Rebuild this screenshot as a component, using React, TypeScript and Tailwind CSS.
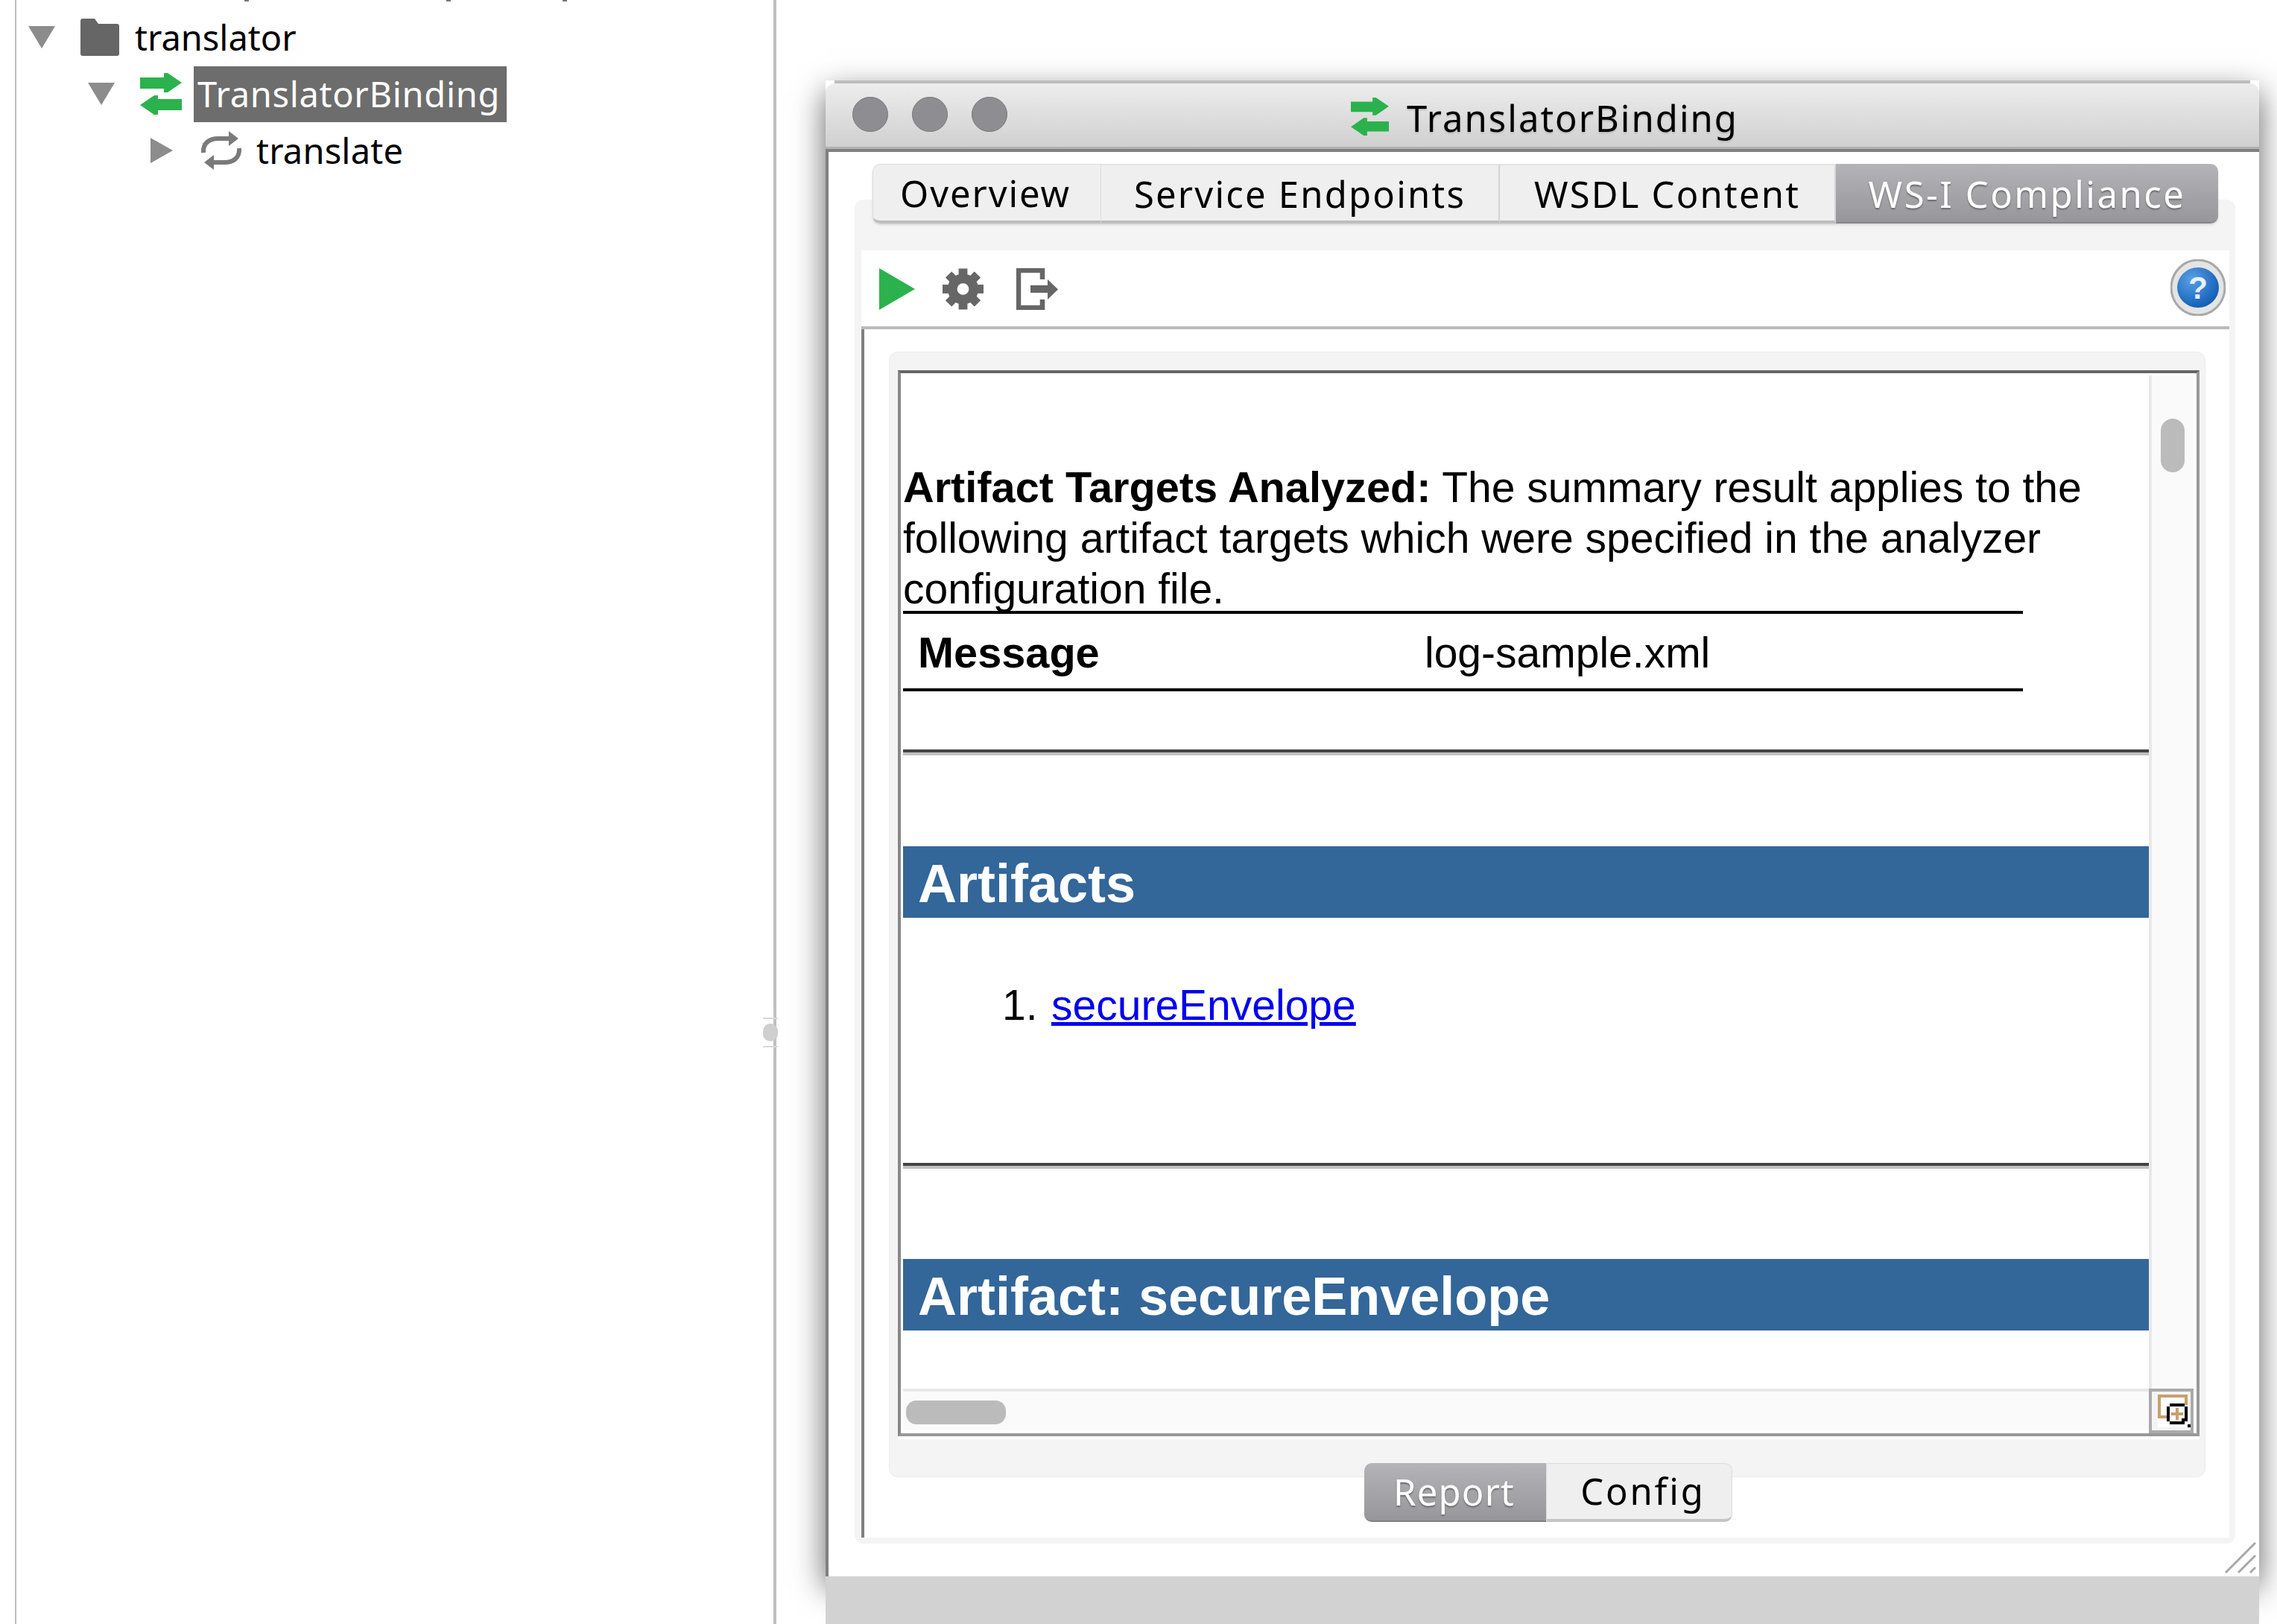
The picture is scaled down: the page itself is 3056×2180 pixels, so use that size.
const uiFont = "[font-family:'Noto_Sans',sans-serif]";

const SwapIcon = ({ className }: { className: string }) => (
  <svg viewBox="0 0 56 56" className={className}>
    <path d="M0 6h32V0h5l19 13-19 13h-5v-5H0z" fill="#2bb24c" />
    <path d="M56 35H24v-5h-5L0 43l19 13h5v-6h32z" fill="#2bb24c" />
  </svg>
);

const LoopIcon = () => (
  <svg viewBox="0 0 56 54" className="w-[56px] h-[54px]" fill="none">
    <path d="M4 30C3 17 12 11 24 11h16" stroke="#7a7a7a" strokeWidth="6" />
    <path d="M38 1l13 10-13 10z" fill="#7a7a7a" />
    <path d="M52 24c1 13-8 19-20 19H16" stroke="#7a7a7a" strokeWidth="6" />
    <path d="M18 33L5 43l13 10z" fill="#7a7a7a" />
  </svg>
);

const Caret = ({ open }: { open: boolean }) =>
  open ? (
    <svg viewBox="0 0 36 30" className="w-[36px] h-[30px]">
      <path d="M0 0h36L18 30z" fill="#8c8c8c" />
    </svg>
  ) : (
    <svg viewBox="0 0 30 34" className="w-[30px] h-[34px]">
      <path d="M0 0l30 17L0 34z" fill="#8c8c8c" />
    </svg>
  );

const Gear = () => (
  <svg viewBox="0 0 56 56" className="w-[55px] h-[56px]">
    <g fill="#666">
      <rect x="22" y="0" width="12" height="56" />
      <rect x="22" y="0" width="12" height="56" transform="rotate(45 28 28)" />
      <rect x="22" y="0" width="12" height="56" transform="rotate(90 28 28)" />
      <rect x="22" y="0" width="12" height="56" transform="rotate(135 28 28)" />
    </g>
    <circle cx="28" cy="28" r="21" fill="#666" />
    <circle cx="28" cy="28" r="8" fill="#fff" />
  </svg>
);

const ExportIcon = () => (
  <svg viewBox="0 0 56 56" className="w-[56px] h-[56px]" fill="none">
    <path d="M35 15V3H3v50h32V42" stroke="#666" strokeWidth="6.5" />
    <path d="M19 23h23v-8l14 13.500-14 13.500v-9H19z" fill="#666" />
  </svg>
);

const HelpIcon = () => (
  <svg viewBox="0 0 74 76" className="w-[74px] h-[76px]">
    <ellipse cx="37" cy="38" rx="36" ry="37" fill="#e4e4e4" stroke="#a9a9a9" strokeWidth="3" />
    <defs>
      <radialGradient id="helpBlue" cx="35%" cy="30%" r="75%">
        <stop offset="0%" stopColor="#5a9fe6" />
        <stop offset="100%" stopColor="#0f5db5" />
      </radialGradient>
    </defs>
    <ellipse cx="37" cy="38" rx="28" ry="27" fill="url(#helpBlue)" />
    <text x="37" y="53" textAnchor="middle" fontSize="42" fontWeight="700" fill="#e8f1fb" fontFamily="Liberation Sans, sans-serif">?</text>
  </svg>
);

const ZoomCorner = () => (
  <svg viewBox="0 0 44 44" className="w-[44px] h-[44px]" shapeRendering="crispEdges">
    <rect x="0" y="0" width="40" height="44" fill="#fff" />
    <path d="M2 30V2h36v12" fill="none" stroke="#c8a06c" strokeWidth="4" />
    <rect x="0" y="28" width="14" height="4" fill="#c8a06c" />
    <path d="M16 12h20v4h4v20h-4v4H16v-4h-4V16h4z" fill="#000" />
    <rect x="16" y="16" width="20" height="20" fill="#fff" />
    <rect x="24" y="18" width="4" height="16" fill="#c8a06c" />
    <rect x="18" y="24" width="16" height="4" fill="#c8a06c" />
    <rect x="32" y="32" width="4" height="4" fill="#000" />
    <rect x="40" y="40" width="4" height="4" fill="#000" />
  </svg>
);

const TreeRow = ({ indent, children }: { indent: string; children: React.ReactNode }) => (
  <div className={`flex items-center h-[76px] ${indent}`}>{children}</div>
);

const Tab = ({ label, width, active }: { label: string; width: string; active?: boolean }) => (
  <div
    className={`${width} h-full flex items-center justify-center pt-[3px] text-[49px] ${
      active
        ? "tracking-[2.5px] bg-gradient-to-b from-[#b4b4b8] to-[#97979b] text-white rounded-r-[10px] [text-shadow:0_2px_2px_#6a6a6a] border-b-2 border-[#85858a]"
        : "tracking-[2.2px] bg-[#efefef] text-black border-r-2 border-[#d4d4d4] border-t-2 border-t-[#e4e4e4] border-b-4 border-b-[#bdbdbd]"
    }`}
  >
    {label}
  </div>
);

export default function App() {
  return (
    <div className={`w-[3056px] h-[2180px] overflow-hidden bg-white flex ${uiFont}`}>
      {/* left tree */}
      <div className="w-[1042px] h-full shrink-0 relative border-r-4 border-[#c0c0c0]">
        <div className="ml-[20px] h-full border-l-2 border-[#bdbdbd] text-[47px] text-black">
          {/* descenders of the row scrolled out above */}
          <div className="h-[2px] flex mb-[10px]">
            <div className="ml-[306px] w-[6px] bg-[#777777]" />
            <div className="ml-[265px] w-[6px] bg-[#777777]" />
            <div className="ml-[150px] w-[6px] bg-[#777777]" />
          </div>
          <TreeRow indent="pl-[16px] gap-[34px]">
            <Caret open />
            <svg viewBox="0 0 52 50" className="w-[52px] h-[50px]">
              <path d="M3 0h16l5 7h25a3 3 0 0 1 3 3v37a3 3 0 0 1-3 3H3a3 3 0 0 1-3-3V3a3 3 0 0 1 3-3z" fill="#666" />
            </svg>
            <span className="ml-[-13px]">translator</span>
          </TreeRow>
          <TreeRow indent="pl-[96px] gap-[34px]">
            <Caret open />
            <SwapIcon className="w-[56px] h-[56px]" />
            <span className="ml-[-18px] h-[75px] w-[420px] bg-[#6d6d6d] text-white flex items-center pl-[5px] tracking-[0.7px]">TranslatorBinding</span>
          </TreeRow>
          <TreeRow indent="pl-[180px] gap-[37px]">
            <Caret open={false} />
            <LoopIcon />
            <span className="ml-[-18px] tracking-[0.2px]">translate</span>
          </TreeRow>
        </div>
        {/* sash handle */}
        <div className="absolute left-[1024px] top-[1366px] w-[20px] h-[40px] border-y-2 border-[#d8d8d8] flex items-center">
          <div className="w-[20px] h-[24px] rounded-full bg-[#cfcfcf]" />
        </div>
      </div>

      {/* floating window */}
      <div className="pl-[66px] pt-[108px] flex flex-col">
        <div className="w-[1924px] h-[2008px] flex flex-col shadow-[0_16px_40px_rgba(0,0,0,0.62)] bg-white">
          <div className="h-[4px] mx-[12px] bg-[#bdbdbd] shrink-0" />
          <div className="h-[92px] shrink-0 rounded-t-[12px] bg-gradient-to-b from-[#ededed] to-[#cfcfcf] border-b-[4px] border-[#808080] shadow-[inset_0_-3px_0_#b0b0b0] flex items-center relative">
            <div className="flex gap-[32px] pl-[36px] mb-[5px]">
              <div className="w-[48px] h-[47px] rounded-full bg-[#8e8e92] border border-[#77777a]" />
              <div className="w-[48px] h-[47px] rounded-full bg-[#8e8e92] border border-[#77777a]" />
              <div className="w-[48px] h-[47px] rounded-full bg-[#8e8e92] border border-[#77777a]" />
            </div>
            <div className="absolute left-[704px] top-[16px] flex items-center gap-[23px] text-[49px] leading-[51px] tracking-[2px] text-black">
              <SwapIcon className="w-[53px] h-[51px]" />
              <span className="pt-[5px] [text-shadow:0_2px_2px_#bbb]">TranslatorBinding</span>
            </div>
          </div>

          <div className="flex-1 border-l-4 border-[#808080] pt-[16px] flex flex-col relative">
            <div className="ml-[59px] w-[1806px] h-[80px] flex relative z-10 shrink-0 rounded-[10px] shadow-[0_2px_3px_rgba(0,0,0,0.12)]">
              <div className="w-[307px] h-full flex items-center justify-center pt-[3px] pr-[4px] text-[49px] tracking-[1.9px] bg-[#efefef] text-black rounded-l-[10px] border border-[#dcdcdc] border-b-4 border-b-[#bdbdbd]">Overview</div>
              <Tab label="Service Endpoints" width="w-[535px]" />
              <Tab label="WSDL Content" width="w-[451px]" />
              <Tab label="WS-I Compliance" width="w-[513px]" active />
            </div>

            <div className="ml-[35px] mt-[-32px] w-[1853px] h-[1804px] rounded-[12px] bg-[#f4f4f4] pt-[68px] pl-[9px] pr-[8px] pb-[8px] flex flex-col">
              <div className="h-[106px] shrink-0 bg-white border-b-4 border-[#bbbbbb] flex items-start pt-[24px] relative">
                <svg viewBox="0 0 48 56" className="w-[48px] h-[56px] ml-[24px]">
                  <path d="M0 0l48 28L0 56z" fill="#2bb24c" />
                </svg>
                <div className="ml-[37px]"><Gear /></div>
                <div className="ml-[44px]"><ExportIcon /></div>
                <div className="absolute left-[1757px] top-[12px]"><HelpIcon /></div>
              </div>

              <div className="flex-1 bg-white border-l-4 border-[#808080] flex flex-col">
                <div className="ml-[33px] mt-[30px] w-[1767px] h-[1511px] shrink-0 rounded-[12px] bg-[#f4f4f4] border border-[#ececec] pt-[24px] pl-[11px]">
                  <div className="w-[1747px] h-[1431px] bg-white border-4 border-[#999999] border-t-[#666666] border-l-[#888888] shadow-[0_4px_0_#ffffff] pr-[4px] pb-[4px] flex flex-col">
                    <div className="flex flex-1 min-h-0">
                      <div className="flex-1 min-w-0 overflow-hidden pl-[3px] pt-[119px] font-['Liberation_Sans',sans-serif] text-[57px] leading-[68px] text-black">
                        <p className="whitespace-nowrap">
                          <b className="text-[57.7px]">Artifact Targets Analyzed:</b> The summary result applies to the
                          <br />
                          following artifact targets which were specified in the analyzer
                          <br />
                          configuration file.
                        </p>
                        <div className="mt-[-4px] w-[1503px] h-[108px] border-y-4 border-black flex items-center pl-[20px] pt-[4px]">
                          <b className="w-[680px] text-[57.7px]">Message</b>
                          <span>log-sample.xml</span>
                        </div>
                        <div className="mt-[78px] h-[8px] border-t-4 border-[#444444] bg-[#c0c0c0]" />
                        <div className="mt-[122px] h-[96px] bg-[#336699] text-white font-bold text-[72px] flex items-center pl-[20px] pt-[4px]">Artifacts</div>
                        <div className="mt-[83px] flex pl-[133px]">
                          <span className="w-[66px]">1.</span>
                          <a className="text-[#0000ee] underline">secureEnvelope</a>
                        </div>
                        <div className="mt-[178px] h-[8px] border-t-4 border-[#444444] bg-[#c0c0c0]" />
                        <div className="mt-[121px] h-[96px] bg-[#336699] text-white font-bold text-[72px] flex items-center pl-[20px] pt-[4px]">Artifact: secureEnvelope</div>
                      </div>
                      <div className="w-[60px] shrink-0 mt-[3px] bg-[#fafafa] border-l-4 border-[#e8e8e8] pt-[58px] pl-[12px]">
                        <div className="w-[32px] h-[72px] rounded-full bg-[#bbbbbb]" />
                      </div>
                    </div>
                    <div className="h-[56px] shrink-0 flex">
                      <div className="flex-1 ml-[3px] bg-[#fafafa] border-t-4 border-[#e8e8e8] pt-[12px] pl-[4px]">
                        <div className="w-[134px] h-[32px] rounded-[14px] bg-[#bbbbbb]" />
                      </div>
                      <div className="w-[60px] shrink-0 h-[60px] border-4 border-[#aaaaaa] bg-[#f4f4f4] pt-[4px] pl-[8px]">
                        <ZoomCorner />
                      </div>
                    </div>
                  </div>
                </div>

                <div className="ml-[671px] mt-[-19px] w-[494px] h-[79px] flex relative text-[49px] shrink-0">
                  <div className="w-[244px] h-full rounded-l-[10px] bg-gradient-to-b from-[#b4b4b8] to-[#97979b] border-b-2 border-[#808085] text-white flex items-center justify-center pr-[3px] tracking-[1.2px] [text-shadow:0_2px_2px_#6a6a6a]">Report</div>
                  <div className="flex-1 h-full rounded-r-[10px] bg-[#efefef] border border-[#dcdcdc] border-b-4 border-b-[#c4c4c4] text-black flex items-center justify-center pl-[10px] tracking-[2.8px]">Config</div>
                </div>
              </div>
            </div>

            {/* resize grip */}
            <svg viewBox="0 0 42 42" className="absolute right-[4px] bottom-[4px] w-[42px] h-[42px]">
              <path d="M1 41L41 1M18 41L41 18M34 41l7-7" stroke="#a8a8a8" strokeWidth="3" fill="none" />
            </svg>
          </div>
        </div>
        <div className="w-[1924px] h-[64px] shrink-0 bg-[#d2d2d2] relative" />
      </div>
    </div>
  );
}
